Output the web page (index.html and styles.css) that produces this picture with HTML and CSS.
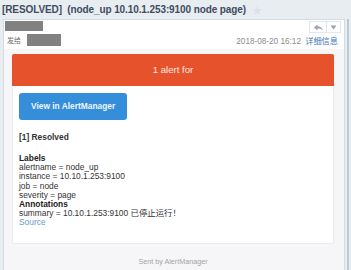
FILE: index.html
```html
<!DOCTYPE html>
<html lang="zh-CN">
<head>
    <meta charset="UTF-8">
    <title>[RESOLVED] node_up</title>
    <link rel="stylesheet" href="styles.css">
</head>
<body>
    <div class="subject">
        <span>[RESOLVED]&nbsp; (node_up 10.10.1.253:9100 node page)</span>
        <span class="star">&#9733;</span>
    </div>
    <div class="frame">
        <div class="mail">
            <div class="mail-head">
                <div class="head-row">
                    <span class="mask mask-from"></span>
                    <div class="tools">
                        <span class="tool">
                            <svg width="9" height="7" viewBox="0 0 9 7"><path d="M0 3.5 L3.5 0.5 V2.3 C6 2.3 8 3.3 8.6 6.3 C7.4 4.8 6 4.5 3.5 4.5 V6.5 Z" fill="#9aa3ad"/></svg>
                        </span>
                        <span class="tool">
                            <svg width="7" height="5" viewBox="0 0 7 5"><path d="M0.5 0.5 H6.5 L3.5 4.5 Z" fill="#9aa3ad"/></svg>
                        </span>
                    </div>
                </div>
                <div class="head-row row2">
                    <div class="to">
                        <span class="to-label">发给</span>
                        <span class="mask mask-to"></span>
                    </div>
                    <div class="meta">
                        <span class="date">2018-08-20 16:12</span>
                        <a class="detail">详细信息</a>
                    </div>
                </div>
            </div>
            <div class="mail-body">
                <div class="card">
                    <div class="alert-bad">1 alert for</div>
                    <div class="content">
                        <a class="btn">View in AlertManager</a>
                        <p class="status">[1] Resolved</p>
                        <div class="lines">
                            <div class="line"><b>Labels</b></div>
                            <div class="line">alertname = node_up</div>
                            <div class="line">instance = 10.10.1.253:9100</div>
                            <div class="line">job = node</div>
                            <div class="line">severity = page</div>
                            <div class="line"><b>Annotations</b></div>
                            <div class="line">summary = 10.10.1.253:9100 已停止运行！</div>
                            <div class="line"><a class="source">Source</a></div>
                        </div>
                    </div>
                </div>
                <div class="footer">Sent by AlertManager</div>
            </div>
        </div>
        <div class="scroll"></div>
    </div>
</body>
</html>
```

FILE: styles.css
```css
body {
    margin: 0;
    background: #e8edf2;
    font-family: "Liberation Sans", Arial, "Noto Sans CJK SC", sans-serif;
    overflow: hidden;
}
.subject {
    height: 19px;
    display: flex;
    align-items: center;
    padding-left: 2px;
    font-size: 10px;
    font-weight: bold;
    color: #3e4c5e;
    letter-spacing: -0.1px;
}
.star {
    margin-left: 6px;
    color: #dde2e8;
    font-size: 10px;
}
.frame {
    display: flex;
    height: 251px;
}
.mail {
    width: 340px;
    margin-left: 3px;
    background: #fff;
    border: 1px solid #d4dbe3;
    border-bottom: 0;
}
.scroll {
    width: 2px;
    margin-left: 2px;
    background: #bccad8;
}
.mail-head {
    height: 28px;
    padding: 1px 2px 0 1px;
}
.head-row {
    display: flex;
    justify-content: space-between;
    height: 11px;
}
.mask {
    display: inline-block;
    background: #818181;
}
.mask-from {
    width: 38px;
    height: 10px;
}
.tools {
    display: flex;
    border: 1px solid #e3e7ec;
    height: 10px;
    margin-right: 1px;
}
.tool {
    width: 16px;
    display: flex;
    align-items: center;
    justify-content: center;
}
.tool + .tool {
    border-left: 1px solid #e3e7ec;
    width: 13px;
}
.row2 {
    height: 13px;
    align-items: center;
    margin-top: 1px;
}
.to {
    display: flex;
    align-items: center;
    padding-left: 2px;
}
.to-label {
    font-size: 7px;
    color: #6a6a6a;
    width: 20px;
}
.mask-to {
    width: 34px;
    height: 12px;
}
.meta {
    font-size: 8.2px;
    margin-right: 4px;
}
.date {
    color: #8c8c8c;
}
.detail {
    color: #3f76b0;
    margin-left: 2px;
}
.mail-body {
    background: #f6f6f8;
    padding: 5px 10px 0 8px;
    height: 218px;
}
.card {
    background: #fff;
    border: 1px solid #ececee;
    border-radius: 2px;
    height: 188px;
}
.alert-bad {
    background: #e6522c;
    color: #fde9e3;
    font-size: 9.6px;
    height: 32px;
    line-height: 31px;
    text-align: center;
    border-radius: 2px 2px 0 0;
    margin: -1px -1px 0;
}
.content {
    padding: 7px 6px 0;
    font-size: 8.4px;
    color: #333;
}
.btn {
    display: inline-block;
    background: #348eda;
    color: #eef5fc;
    font-weight: bold;
    padding: 0 12px;
    height: 27px;
    line-height: 27px;
    border-radius: 3px;
}
.status {
    font-weight: bold;
    margin: 12px 0 0;
}
.lines {
    margin-top: 12px;
}
.line {
    height: 9.2px;
    line-height: 9.2px;
    white-space: nowrap;
}
.lines b {
    color: #222;
}
.source {
    color: #6b97c9;
}
.footer {
    text-align: center;
    font-size: 7.2px;
    color: #a3a3a6;
    margin-top: 13px;
}
```
